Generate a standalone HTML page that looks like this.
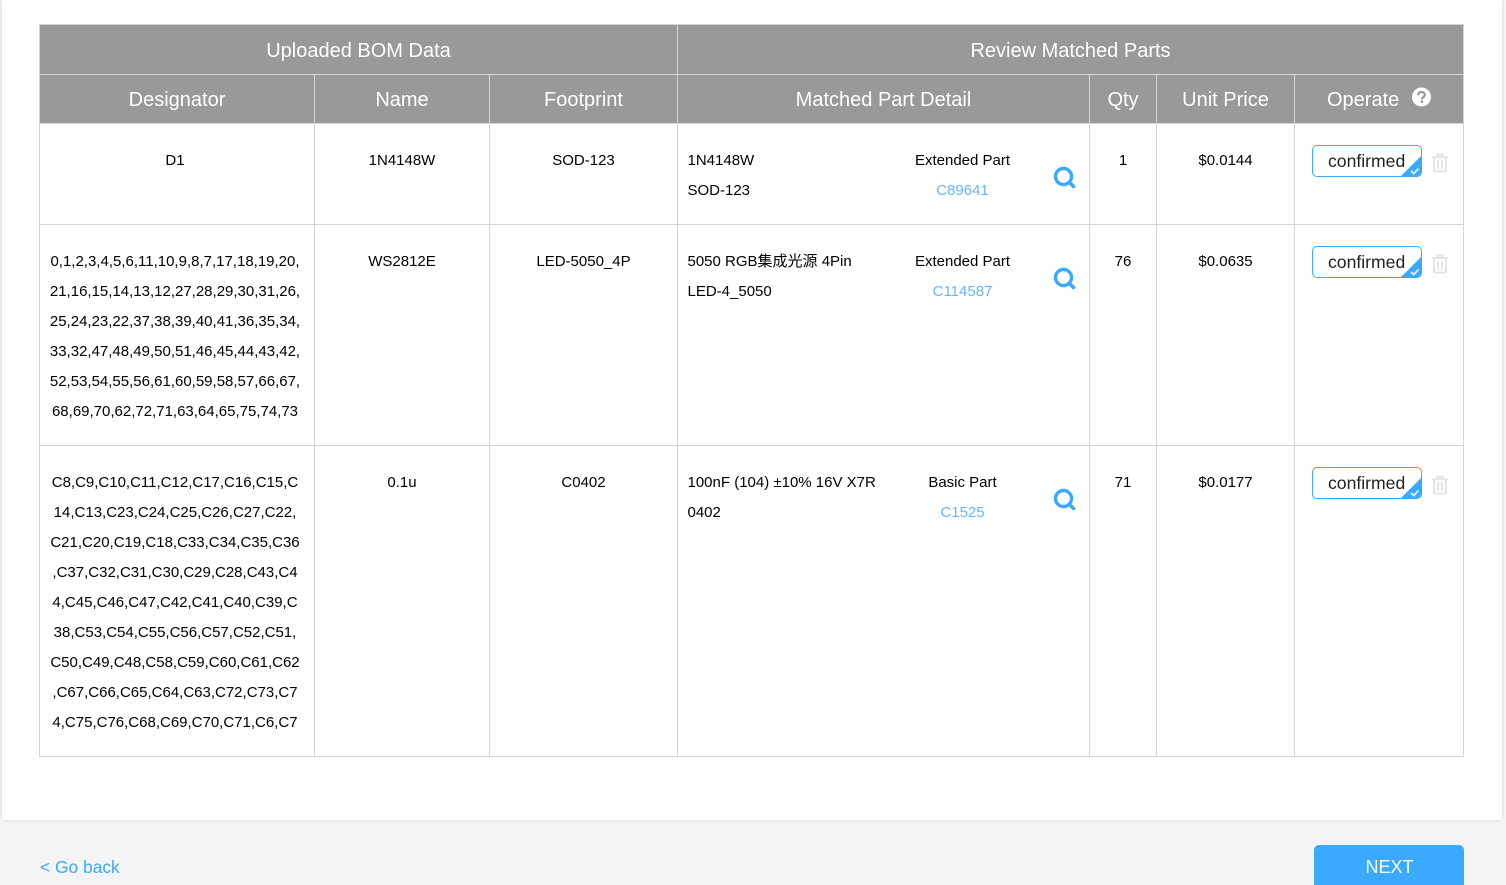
<!DOCTYPE html>
<html>
<head>
<meta charset="utf-8">
<style>
html,body{margin:0;padding:0;width:1506px;height:885px;overflow:hidden;background:#f4f4f4;font-family:"Liberation Sans","Noto Sans CJK SC",sans-serif;color:#000}
#card{position:absolute;left:2px;top:0;width:1500px;height:820px;background:#fff;box-shadow:0 0 3px rgba(0,0,0,.16)}
.h{position:absolute;background:#999}
.l{position:absolute;background:#d4d4d4}
.t{position:absolute;white-space:nowrap;font-size:15px;line-height:30px;height:30px;text-align:center}
.hd{position:absolute;white-space:nowrap;font-size:20px;line-height:30px;color:#fff;text-align:center}
.a{text-align:left}
.b{color:#66b5ff}
.btn{position:absolute;left:1312px;width:108px;height:30px;border:1px solid #3aa9ff;border-radius:5px;background:#fff;overflow:hidden;font-size:17.6px;line-height:30px;text-indent:15px;color:#222}
.btn i{position:absolute;right:0;bottom:0;width:0;height:0;border-style:solid;border-width:0 0 20px 20px;border-color:transparent transparent #3aa9ff transparent}
.btn svg{position:absolute;right:1px;bottom:1px}
svg.s,svg.d,svg.q{position:absolute}
</style>
</head>
<body>
<div id="card"></div>

<div class="h" style="left:39px;top:24px;width:1425px;height:100px"></div>

<div class="l" style="left:39px;top:24px;width:1425px;height:1px"></div>
<div class="l" style="left:39px;top:74px;width:1425px;height:1px"></div>
<div class="l" style="left:39px;top:123px;width:1425px;height:1px"></div>
<div class="l" style="left:39px;top:224px;width:1425px;height:1px"></div>
<div class="l" style="left:39px;top:445px;width:1425px;height:1px"></div>
<div class="l" style="left:39px;top:756px;width:1425px;height:1px"></div>

<div class="l" style="left:39px;top:24px;width:1px;height:733px"></div>
<div class="l" style="left:314px;top:75px;width:1px;height:682px"></div>
<div class="l" style="left:489px;top:75px;width:1px;height:682px"></div>
<div class="l" style="left:677px;top:24px;width:1px;height:733px"></div>
<div class="l" style="left:1089px;top:75px;width:1px;height:682px"></div>
<div class="l" style="left:1156px;top:75px;width:1px;height:682px"></div>
<div class="l" style="left:1294px;top:75px;width:1px;height:682px"></div>
<div class="l" style="left:1463px;top:24px;width:1px;height:733px"></div>

<div class="hd" style="left:40px;top:36px;width:637px">Uploaded BOM Data</div>
<div class="hd" style="left:678px;top:36px;width:785px">Review Matched Parts</div>
<div class="hd" style="left:40px;top:85px;width:274px">Designator</div>
<div class="hd" style="left:315px;top:85px;width:174px">Name</div>
<div class="hd" style="left:490px;top:85px;width:187px">Footprint</div>
<div class="hd" style="left:678px;top:85px;width:411px">Matched Part Detail</div>
<div class="hd" style="left:1090px;top:85px;width:66px">Qty</div>
<div class="hd" style="left:1157px;top:85px;width:137px">Unit Price</div>
<div class="hd" style="left:1327px;top:85px">Operate</div>
<svg class="s" style="left:1411px;top:87px" width="21" height="21" viewBox="0 0 21 21"><circle cx="10.5" cy="10" r="9.5" fill="#fff"/><path d="M7.2 8.2C7.2 6.2 8.6 5 10.5 5S13.8 6.2 13.8 8C13.8 10.2 11 10.2 11 12.2" fill="none" stroke="#999" stroke-width="2.2"/><rect x="9.7" y="13.4" width="2.5" height="2.4" fill="#999"/></svg>

<!-- Row 1 -->
<div class="t" style="left:40px;top:146px;width:270px">D1</div>
<div class="t" style="left:315px;top:146px;width:174px">1N4148W</div>
<div class="t" style="left:490px;top:146px;width:187px">SOD-123</div>
<div class="t a" style="left:687.5px;top:146px">1N4148W</div>
<div class="t a" style="left:687.5px;top:176px">SOD-123</div>
<div class="t" style="left:880px;top:146px;width:165px">Extended Part</div>
<div class="t b" style="left:880px;top:176px;width:165px">C89641</div>
<svg class="q" style="left:1053px;top:166px" width="23" height="23" viewBox="0 0 23 23"><circle cx="10.5" cy="10.5" r="8" fill="none" stroke="#3aa9ff" stroke-width="3.4"/><path d="M16.5 16.5L20.5 20.5" stroke="#3aa9ff" stroke-width="3.6" stroke-linecap="round"/></svg>
<div class="t" style="left:1090px;top:146px;width:66px">1</div>
<div class="t" style="left:1157px;top:146px;width:137px">$0.0144</div>
<div class="btn" style="top:145px">confirmed<i></i><svg width="10" height="8" viewBox="0 0 10 8"><path d="M1 4L3.8 6.5L8.5 1.5" fill="none" stroke="#d8eeff" stroke-width="2"/></svg></div>
<svg class="d" style="left:1431px;top:153px" width="18" height="20" viewBox="0 0 18 20"><path d="M1 4H17M6 4V1.5H12V4M3 4V18.5H15V4M7 7V16M11 7V16" fill="none" stroke="#e2e2e2" stroke-width="1.7"/></svg>

<!-- Row 2 -->
<div class="t" style="left:40px;top:247px;width:270px">0,1,2,3,4,5,6,11,10,9,8,7,17,18,19,20,</div>
<div class="t" style="left:40px;top:277px;width:270px">21,16,15,14,13,12,27,28,29,30,31,26,</div>
<div class="t" style="left:40px;top:307px;width:270px">25,24,23,22,37,38,39,40,41,36,35,34,</div>
<div class="t" style="left:40px;top:337px;width:270px">33,32,47,48,49,50,51,46,45,44,43,42,</div>
<div class="t" style="left:40px;top:367px;width:270px">52,53,54,55,56,61,60,59,58,57,66,67,</div>
<div class="t" style="left:40px;top:397px;width:270px">68,69,70,62,72,71,63,64,65,75,74,73</div>
<div class="t" style="left:315px;top:247px;width:174px">WS2812E</div>
<div class="t" style="left:490px;top:247px;width:187px">LED-5050_4P</div>
<div class="t a" style="left:687.5px;top:247px">5050 RGB集成光源 4Pin</div>
<div class="t a" style="left:687.5px;top:277px">LED-4_5050</div>
<div class="t" style="left:880px;top:247px;width:165px">Extended Part</div>
<div class="t b" style="left:880px;top:277px;width:165px">C114587</div>
<svg class="q" style="left:1053px;top:267px" width="23" height="23" viewBox="0 0 23 23"><circle cx="10.5" cy="10.5" r="8" fill="none" stroke="#3aa9ff" stroke-width="3.4"/><path d="M16.5 16.5L20.5 20.5" stroke="#3aa9ff" stroke-width="3.6" stroke-linecap="round"/></svg>
<div class="t" style="left:1090px;top:247px;width:66px">76</div>
<div class="t" style="left:1157px;top:247px;width:137px">$0.0635</div>
<div class="btn" style="top:246px">confirmed<i></i><svg width="10" height="8" viewBox="0 0 10 8"><path d="M1 4L3.8 6.5L8.5 1.5" fill="none" stroke="#d8eeff" stroke-width="2"/></svg></div>
<svg class="d" style="left:1431px;top:254px" width="18" height="20" viewBox="0 0 18 20"><path d="M1 4H17M6 4V1.5H12V4M3 4V18.5H15V4M7 7V16M11 7V16" fill="none" stroke="#e2e2e2" stroke-width="1.7"/></svg>

<!-- Row 3 -->
<div class="t" style="left:40px;top:468px;width:270px">C8,C9,C10,C11,C12,C17,C16,C15,C</div>
<div class="t" style="left:40px;top:498px;width:270px">14,C13,C23,C24,C25,C26,C27,C22,</div>
<div class="t" style="left:40px;top:528px;width:270px">C21,C20,C19,C18,C33,C34,C35,C36</div>
<div class="t" style="left:40px;top:558px;width:270px">,C37,C32,C31,C30,C29,C28,C43,C4</div>
<div class="t" style="left:40px;top:588px;width:270px">4,C45,C46,C47,C42,C41,C40,C39,C</div>
<div class="t" style="left:40px;top:618px;width:270px">38,C53,C54,C55,C56,C57,C52,C51,</div>
<div class="t" style="left:40px;top:648px;width:270px">C50,C49,C48,C58,C59,C60,C61,C62</div>
<div class="t" style="left:40px;top:678px;width:270px">,C67,C66,C65,C64,C63,C72,C73,C7</div>
<div class="t" style="left:40px;top:708px;width:270px">4,C75,C76,C68,C69,C70,C71,C6,C7</div>
<div class="t" style="left:315px;top:468px;width:174px">0.1u</div>
<div class="t" style="left:490px;top:468px;width:187px">C0402</div>
<div class="t a" style="left:687.5px;top:468px">100nF (104) ±10% 16V X7R</div>
<div class="t a" style="left:687.5px;top:498px">0402</div>
<div class="t" style="left:880px;top:468px;width:165px">Basic Part</div>
<div class="t b" style="left:880px;top:498px;width:165px">C1525</div>
<svg class="q" style="left:1053px;top:488px" width="23" height="23" viewBox="0 0 23 23"><circle cx="10.5" cy="10.5" r="8" fill="none" stroke="#3aa9ff" stroke-width="3.4"/><path d="M16.5 16.5L20.5 20.5" stroke="#3aa9ff" stroke-width="3.6" stroke-linecap="round"/></svg>
<div class="t" style="left:1090px;top:468px;width:66px">71</div>
<div class="t" style="left:1157px;top:468px;width:137px">$0.0177</div>
<div class="btn" style="top:467px">confirmed<i></i><svg width="10" height="8" viewBox="0 0 10 8"><path d="M1 4L3.8 6.5L8.5 1.5" fill="none" stroke="#d8eeff" stroke-width="2"/></svg></div>
<svg class="d" style="left:1431px;top:475px" width="18" height="20" viewBox="0 0 18 20"><path d="M1 4H17M6 4V1.5H12V4M3 4V18.5H15V4M7 7V16M11 7V16" fill="none" stroke="#e2e2e2" stroke-width="1.7"/></svg>

<!-- Footer -->
<div class="t a" style="left:40px;top:852px;font-size:17.4px;color:#3aa9ff">&lt; Go back</div>
<div style="position:absolute;left:1314px;top:845px;width:150px;height:40px;overflow:hidden;background:#3aa9ff;border-radius:5px 5px 0 0;color:#fff;font-size:18px;line-height:44px;text-align:center;text-indent:1px">NEXT</div>
</body>
</html>
